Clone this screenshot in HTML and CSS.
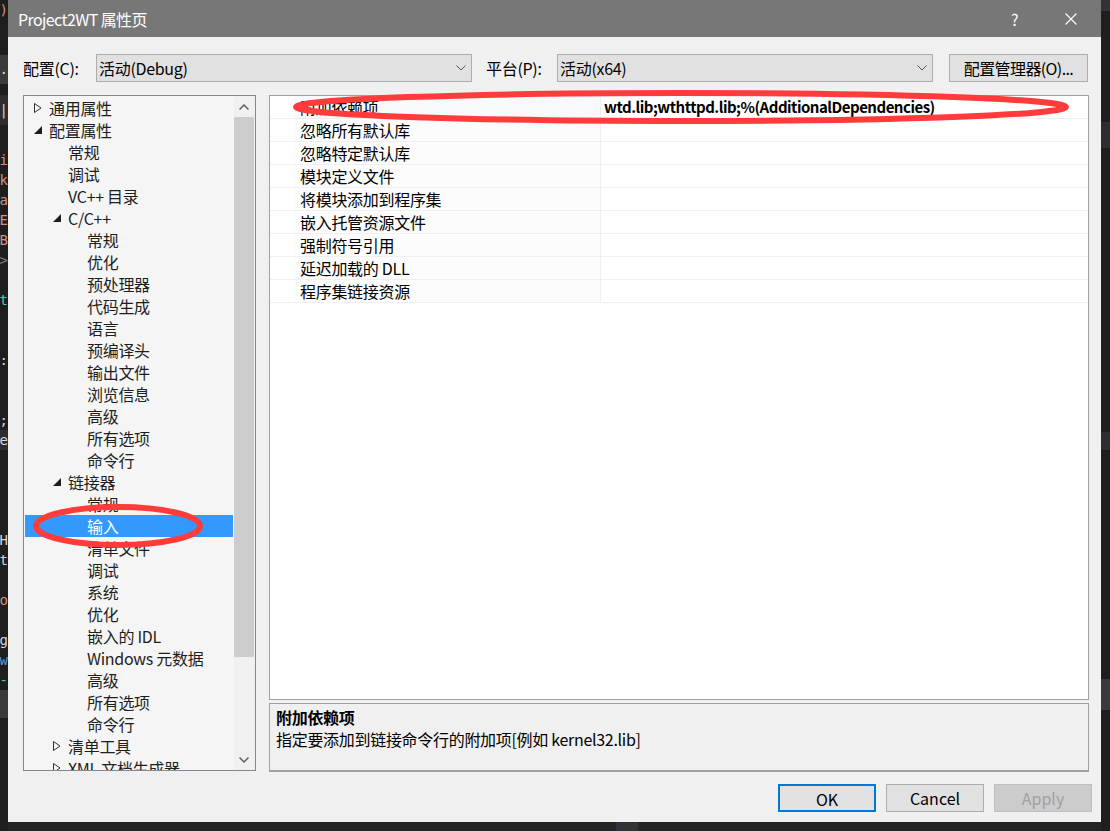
FILE: index.html
```html
<!DOCTYPE html>
<html lang="zh-CN">
<head>
  <meta charset="UTF-8">
  <title>Project2WT 属性页</title>
  <link rel="stylesheet" href="styles.css">
</head>
<body>
  <div class="desk">
    <div class="code-edge">
      <div class="code-line top"><span class="c-str">)</span></div>
      <div class="code-gap h33"></div>
      <div class="code-line tab"><span>PT.</span></div>
      <div class="code-gap h11"></div>
      <div class="code-line tab2"><span>oo|</span></div>
      <div class="code-gap h25"></div>
      <div class="code-line"><span class="c-str">i</span></div>
      <div class="code-line"><span class="c-str">k</span></div>
      <div class="code-line"><span class="c-str">a</span></div>
      <div class="code-line"><span class="c-str">E</span></div>
      <div class="code-line"><span class="c-str">B</span></div>
      <div class="code-line"><span class="c-dim">&gt;</span></div>
      <div class="code-line"></div>
      <div class="code-line"><span class="c-type">t</span></div>
      <div class="code-line"></div>
      <div class="code-line"></div>
      <div class="code-line"><span>o:</span></div>
      <div class="code-line"></div>
      <div class="code-line"></div>
      <div class="code-line"><span>*;</span></div>
      <div class="code-line band"><span>e</span></div>
      <div class="code-line"></div>
      <div class="code-line"></div>
      <div class="code-line"></div>
      <div class="code-line"></div>
      <div class="code-line"><span>H</span></div>
      <div class="code-line"><span>t</span></div>
      <div class="code-line"></div>
      <div class="code-line"><span class="c-str">o</span></div>
      <div class="code-line"></div>
      <div class="code-line"><span>g</span></div>
      <div class="code-line"><span class="c-kw">w</span></div>
      <div class="code-line"><span class="c-type">-</span></div>
      <div class="code-line band2"></div>
    </div>

    <div class="center-col">
      <div class="dialog">
        <div class="titlebar">
          <span class="title">Project2WT 属性页</span>
          <span class="help">?</span>
          <span class="close">
            <svg width="12" height="12" viewBox="0 0 12 12"><path d="M0.5 0.5L11.5 11.5M11.5 0.5L0.5 11.5" stroke="#fff" stroke-width="1.1" fill="none"/></svg>
          </span>
        </div>

        <div class="toolbar">
          <label class="tb-label first">配置(C):</label>
          <div class="combo">
            <span>活动(Debug)</span>
            <svg class="chev" width="10" height="6" viewBox="0 0 10 6"><path d="M0.5 0.5L5 5L9.5 0.5" stroke="#555" stroke-width="1" fill="none"/></svg>
          </div>
          <label class="tb-label second">平台(P):</label>
          <div class="combo">
            <span>活动(x64)</span>
            <svg class="chev" width="10" height="6" viewBox="0 0 10 6"><path d="M0.5 0.5L5 5L9.5 0.5" stroke="#555" stroke-width="1" fill="none"/></svg>
          </div>
          <button class="tb-button">配置管理器(O)...</button>
        </div>

        <div class="main">
          <div class="tree">
            <div class="tree-list">
              <div class="node l0"><span class="tw"><svg width="8" height="10" viewBox="0 0 8 10"><path d="M0.5 0.5L7 5L0.5 9.5Z" stroke="#333" fill="none"/></svg></span>通用属性</div>
              <div class="node l0"><span class="tw"><svg width="8" height="8" viewBox="0 0 8 8"><path d="M8 0L8 8L0 8Z" fill="#1e1e1e"/></svg></span>配置属性</div>
              <div class="node l1"><span class="tw"></span>常规</div>
              <div class="node l1"><span class="tw"></span>调试</div>
              <div class="node l1"><span class="tw"></span>VC++ 目录</div>
              <div class="node l1"><span class="tw"><svg width="8" height="8" viewBox="0 0 8 8"><path d="M8 0L8 8L0 8Z" fill="#1e1e1e"/></svg></span>C/C++</div>
              <div class="node l2"><span class="tw"></span>常规</div>
              <div class="node l2"><span class="tw"></span>优化</div>
              <div class="node l2"><span class="tw"></span>预处理器</div>
              <div class="node l2"><span class="tw"></span>代码生成</div>
              <div class="node l2"><span class="tw"></span>语言</div>
              <div class="node l2"><span class="tw"></span>预编译头</div>
              <div class="node l2"><span class="tw"></span>输出文件</div>
              <div class="node l2"><span class="tw"></span>浏览信息</div>
              <div class="node l2"><span class="tw"></span>高级</div>
              <div class="node l2"><span class="tw"></span>所有选项</div>
              <div class="node l2"><span class="tw"></span>命令行</div>
              <div class="node l1"><span class="tw"><svg width="8" height="8" viewBox="0 0 8 8"><path d="M8 0L8 8L0 8Z" fill="#1e1e1e"/></svg></span>链接器</div>
              <div class="node l2"><span class="tw"></span>常规</div>
              <div class="node l2 selected"><span class="tw"></span>输入</div>
              <div class="node l2"><span class="tw"></span>清单文件</div>
              <div class="node l2"><span class="tw"></span>调试</div>
              <div class="node l2"><span class="tw"></span>系统</div>
              <div class="node l2"><span class="tw"></span>优化</div>
              <div class="node l2"><span class="tw"></span>嵌入的 IDL</div>
              <div class="node l2"><span class="tw"></span>Windows 元数据</div>
              <div class="node l2"><span class="tw"></span>高级</div>
              <div class="node l2"><span class="tw"></span>所有选项</div>
              <div class="node l2"><span class="tw"></span>命令行</div>
              <div class="node l1"><span class="tw"><svg width="8" height="10" viewBox="0 0 8 10"><path d="M0.5 0.5L7 5L0.5 9.5Z" stroke="#333" fill="none"/></svg></span>清单工具</div>
              <div class="node l1"><span class="tw"><svg width="8" height="10" viewBox="0 0 8 10"><path d="M0.5 0.5L7 5L0.5 9.5Z" stroke="#333" fill="none"/></svg></span>XML 文档生成器</div>
            </div>
            <div class="scrollbar">
              <div class="sb-btn"><svg width="10" height="6" viewBox="0 0 10 6"><path d="M0.5 5.5L5 1L9.5 5.5" stroke="#606060" stroke-width="1.5" fill="none"/></svg></div>
              <div class="sb-track"><div class="sb-thumb"></div></div>
              <div class="sb-btn"><svg width="10" height="6" viewBox="0 0 10 6"><path d="M0.5 0.5L5 5L9.5 0.5" stroke="#606060" stroke-width="1.5" fill="none"/></svg></div>
            </div>
          </div>

          <div class="right-col">
            <div class="grid">
              <div class="row first"><span class="margin"></span><span class="name">附加依赖项</span><span class="value bold">wtd.lib;wthttpd.lib;%(AdditionalDependencies)</span></div>
              <div class="row"><span class="margin"></span><span class="name">忽略所有默认库</span><span class="value"></span></div>
              <div class="row"><span class="margin"></span><span class="name">忽略特定默认库</span><span class="value"></span></div>
              <div class="row"><span class="margin"></span><span class="name">模块定义文件</span><span class="value"></span></div>
              <div class="row"><span class="margin"></span><span class="name">将模块添加到程序集</span><span class="value"></span></div>
              <div class="row"><span class="margin"></span><span class="name">嵌入托管资源文件</span><span class="value"></span></div>
              <div class="row"><span class="margin"></span><span class="name">强制符号引用</span><span class="value"></span></div>
              <div class="row"><span class="margin"></span><span class="name">延迟加载的 DLL</span><span class="value"></span></div>
              <div class="row"><span class="margin"></span><span class="name">程序集链接资源</span><span class="value"></span></div>
            </div>
            <div class="desc">
              <div class="desc-title">附加依赖项</div>
              <div class="desc-text">指定要添加到链接命令行的附加项[例如 kernel32.lib]</div>
            </div>
          </div>
        </div>

        <div class="footer">
          <button class="btn default">OK</button>
          <button class="btn">Cancel</button>
          <button class="btn disabled">Apply</button>
        </div>

        <svg class="mark mark-grid" width="790" height="44" viewBox="0 0 790 44">
          <ellipse cx="395" cy="22" rx="385" ry="14" stroke="#ff3b3b" stroke-width="6" fill="none"/>
        </svg>
        <svg class="mark mark-tree" width="180" height="52" viewBox="0 0 180 52">
          <ellipse cx="90" cy="26" rx="82" ry="19" stroke="#ff3b3b" stroke-width="6" fill="none"/>
        </svg>
      </div>
      <div class="bottom-edge"><span class="be-block"></span></div>
    </div>

    <div class="right-edge">
      <div class="re-band b1"></div>
      <div class="re-gap g1"></div>
      <div class="re-band b2"></div>
      <div class="re-gap g2"></div>
      <div class="re-band b3"></div>
      <div class="re-gap g3"></div>
      <div class="re-band b4"></div>
    </div>
  </div>
</body>
</html>
```

FILE: styles.css
```css
* {
  box-sizing: border-box;
}
body {
  margin: 0;
  background: #1e1e1e;
  font-family: "Noto Sans CJK SC", "Noto Sans", sans-serif;
  font-size: 16px;
  letter-spacing: -0.3px;
  color: #000;
  overflow: hidden;
}
.desk {
  display: flex;
  height: 831px;
}

/* editor behind the dialog */
.code-edge {
  width: 8px;
  flex: none;
  overflow: hidden;
  background: #1e1e1e;
  font-family: "DejaVu Sans Mono", monospace;
  font-size: 14px;
  letter-spacing: 0;
  color: #d4d4d4;
}
.code-line {
  height: 20px;
  line-height: 20px;
  display: flex;
  justify-content: flex-end;
  white-space: nowrap;
}
.code-line.top {
  height: 22px;
}
.code-line.tab {
  height: 29px;
  line-height: 29px;
  background: #3a3a3d;
}
.code-line.tab2 {
  height: 30px;
  line-height: 30px;
  background: #2d2d30;
}
.code-line.band {
  background: #2d2d30;
}
.code-line.band2 {
  height: 28px;
  background: #3a3a3d;
}
.code-gap.h33 { height: 33px; }
.code-gap.h11 { height: 11px; }
.code-gap.h25 { height: 25px; }
.c-str { color: #ce9178; }
.c-dim { color: #808080; }
.c-type { color: #4ec9b0; }
.c-kw { color: #569cd6; }

.center-col {
  width: 1093px;
  flex: none;
  display: flex;
  flex-direction: column;
}
.bottom-edge {
  height: 9px;
  background: #252526;
  display: flex;
  padding-left: 608px;
}
.be-block {
  width: 22px;
  background: #333337;
}
.right-edge {
  flex: 1;
  background: #1e1e1e;
  display: flex;
  flex-direction: column;
}
.re-band { background: #333337; }
.re-band.b1 { height: 11px; }
.re-gap.g1 { height: 111px; }
.re-band.b2 { height: 26px; background: #2d2d30; }
.re-gap.g2 { height: 284px; }
.re-band.b3 { height: 18px; background: #2d2d30; }
.re-gap.g3 { height: 229px; }
.re-band.b4 { height: 31px; background: #3a3a3d; }

/* dialog */
.dialog {
  position: relative;
  height: 822px;
  background: #f0f0f0;
  display: flex;
  flex-direction: column;
}
.titlebar {
  height: 37px;
  background: #777777;
  color: #fff;
  display: flex;
  align-items: center;
  padding-left: 10px;
  line-height: 20px;
}
.title {
  font-size: 16px;
  letter-spacing: -0.6px;
}
.help {
  margin-left: auto;
  font-size: 16px;
  width: 10px;
}
.close {
  display: flex;
  margin-left: 44px;
  margin-right: 24px;
}

.toolbar {
  display: flex;
  align-items: center;
  padding: 17px 0 0 15px;
  height: 45px;
}
.tb-label {
  line-height: 28px;
}
.tb-label.first {
  width: 73px;
}
.tb-label.second {
  width: 71px;
  margin-left: 14px;
}
.combo {
  width: 376px;
  height: 28px;
  border: 1px solid #adadad;
  background: #e1e1e1;
  display: flex;
  align-items: center;
  justify-content: space-between;
  padding: 0 5px 0 2px;
  line-height: 26px;
}
.tb-button {
  width: 139px;
  height: 28px;
  margin-left: 16px;
  border: 1px solid #adadad;
  background: #e1e1e1;
  font: inherit;
  letter-spacing: -0.6px;
  line-height: 26px;
  padding: 0;
  color: #000;
}

.main {
  display: flex;
  gap: 13px;
  padding-left: 15px;
  margin-top: 13px;
  height: 677px;
}

/* tree */
.tree {
  width: 233px;
  height: 676px;
  border: 1px solid #828790;
  background: #f5f5f5;
  display: flex;
}
.tree-list {
  flex: 1;
  overflow: hidden;
  padding-top: 1px;
  color: #1e1e1e;
}
.node {
  height: 22px;
  line-height: 22px;
  display: flex;
  align-items: center;
  white-space: nowrap;
  margin-right: 1px;
}
.node.l0 { padding-left: 10px; }
.node.l1 { padding-left: 29px; }
.node.l2 { padding-left: 48px; }
.tw {
  width: 15px;
  flex: none;
  display: flex;
  align-items: center;
}
.node.selected {
  background: #3399ff;
  color: #fff;
  margin-left: 1px;
  padding-left: 47px;
}
.scrollbar {
  width: 21px;
  flex: none;
  background: #f0f0f0;
  display: flex;
  flex-direction: column;
  padding-right: 1px;
}
.sb-btn {
  height: 21px;
  display: flex;
  align-items: center;
  justify-content: center;
}
.sb-track {
  flex: 1;
  display: flex;
  flex-direction: column;
}
.sb-thumb {
  height: 540px;
  background: #cdcdcd;
}

/* property grid */
.right-col {
  width: 820px;
  display: flex;
  flex-direction: column;
  gap: 3px;
}
.grid {
  height: 605px;
  border: 1px solid #a0a0a0;
  background: #fff;
}
.row {
  height: 23px;
  display: flex;
  border-bottom: 1px solid #f0f0f0;
  line-height: 22px;
}
.row .margin {
  width: 25px;
  flex: none;
  background: #fff;
}
.row .name {
  width: 305px;
  flex: none;
  padding-left: 5px;
  background: #fcfcfc;
}
.row .value {
  flex: 1;
  border-left: 1px solid #f0f0f0;
  padding-left: 3px;
}
.row.first .name {
  background: #f7f9fc;
}
.bold {
  font-weight: bold;
}
.value.bold {
  font-size: 15px;
  letter-spacing: -0.5px;
}

.desc {
  height: 69px;
  border: 1px solid #a0a0a0;
  border-bottom-width: 2px;
  background: #f0f0f0;
  padding: 2px 6px;
  line-height: 22px;
}
.desc-title {
  font-weight: bold;
}

.footer {
  display: flex;
  justify-content: flex-end;
  gap: 10px;
  padding-right: 9px;
  margin-top: 12px;
}
.btn {
  width: 98px;
  height: 28px;
  border: 1px solid #adadad;
  background: #e1e1e1;
  font: inherit;
  color: #000;
  padding: 0;
  line-height: 26px;
}
.btn.default {
  border: 2px solid #0078d7;
}
.btn.disabled {
  background: #cccccc;
  border-color: #bfbfbf;
  color: #a0a0a0;
}

/* red annotations drawn over the dialog */
.mark {
  position: absolute;
  pointer-events: none;
}
.mark-grid {
  left: 278px;
  top: 85px;
}
.mark-tree {
  left: 20px;
  top: 500px;
}
```
